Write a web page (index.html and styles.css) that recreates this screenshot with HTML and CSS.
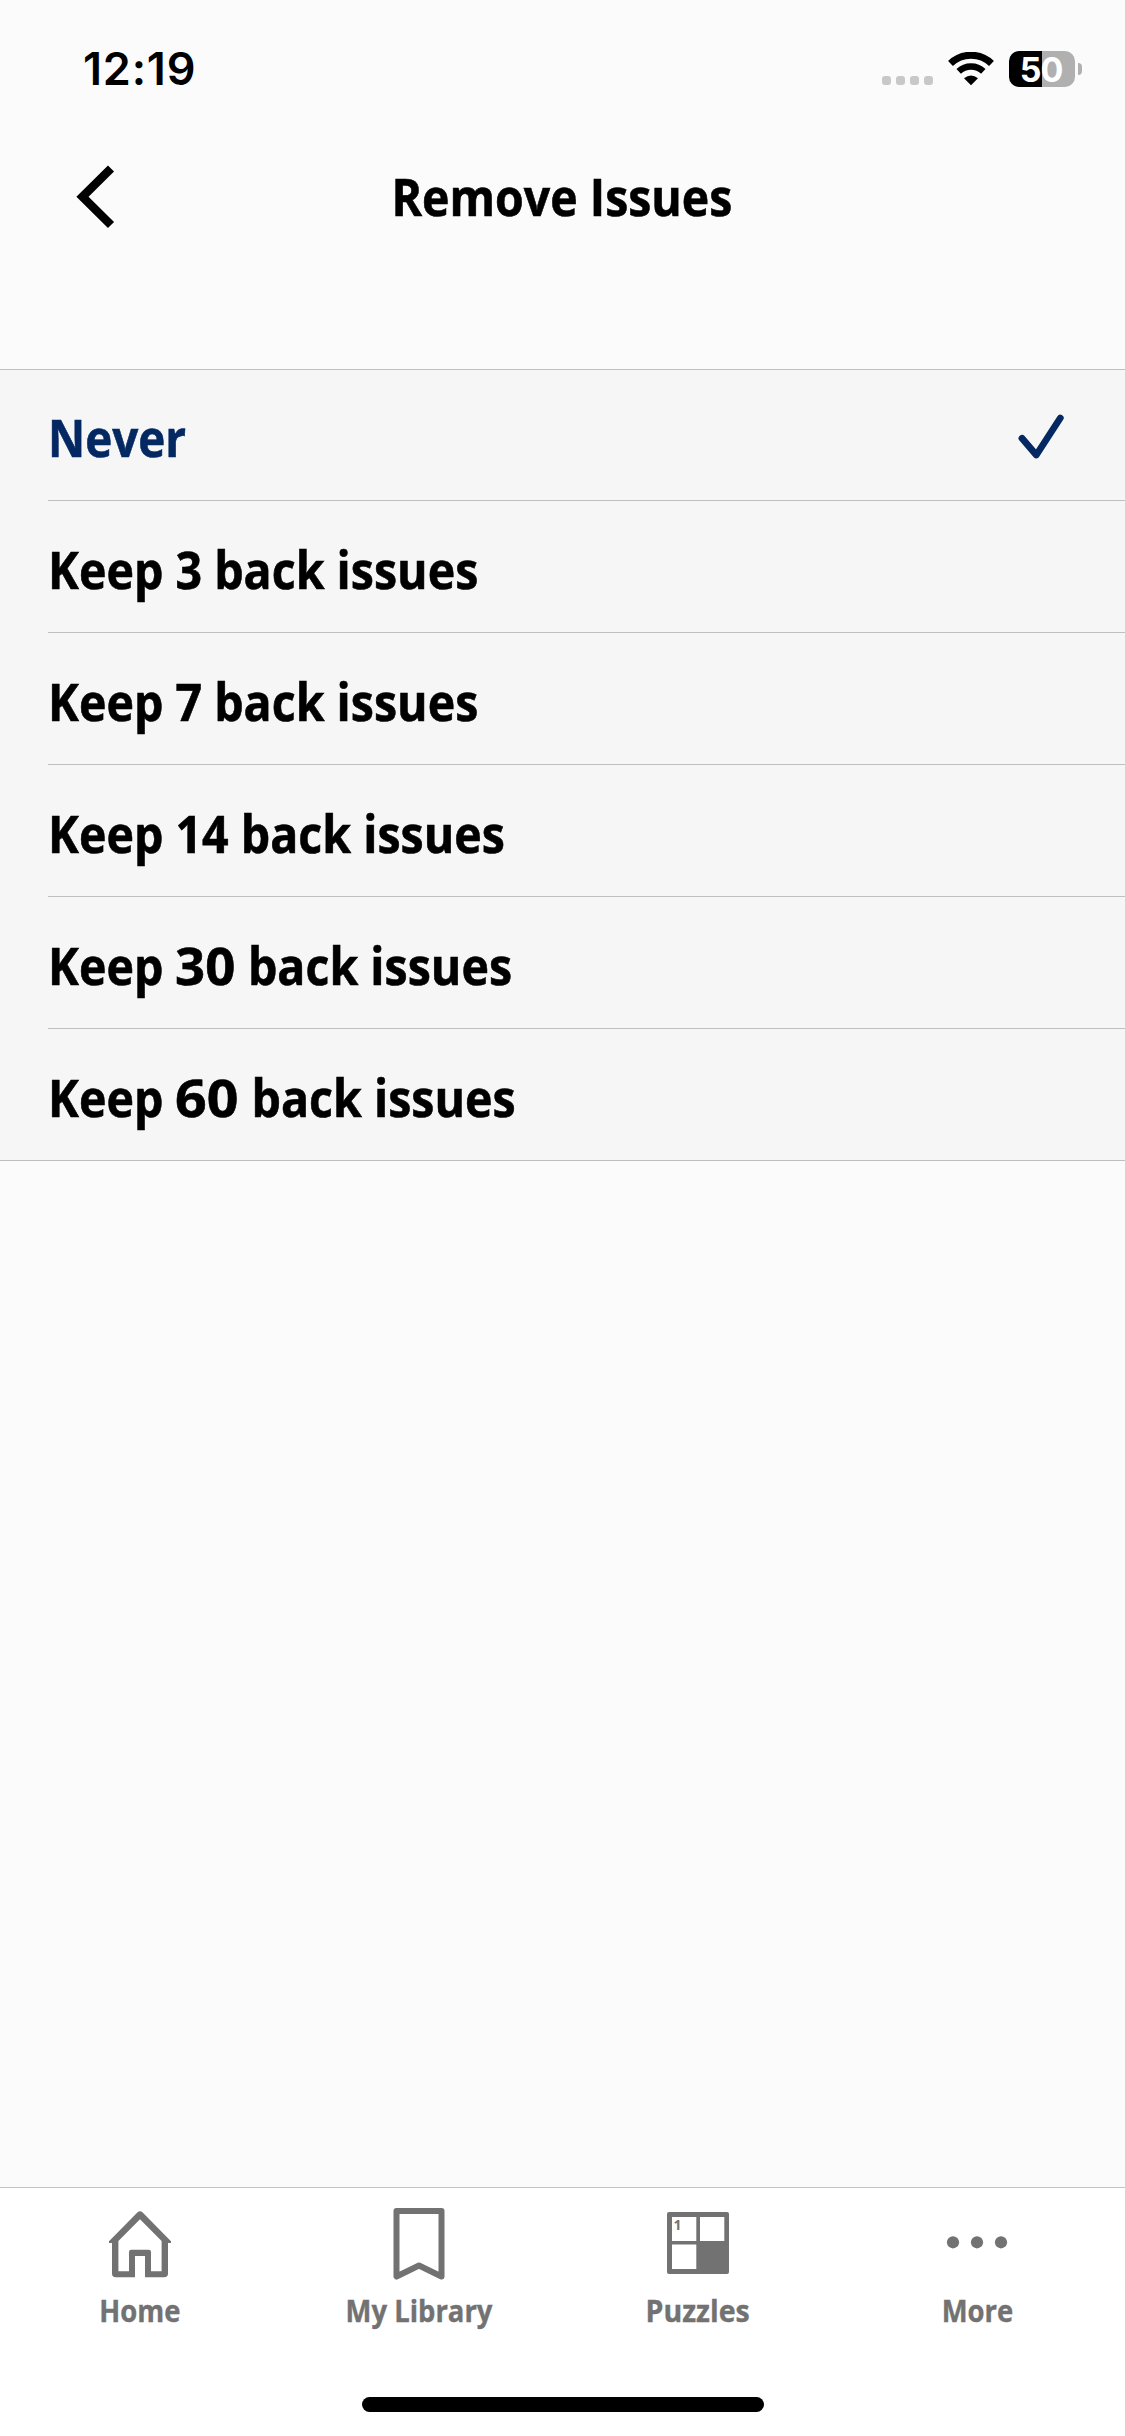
FILE: index.html
```html
<!DOCTYPE html>
<html lang="en">
<head>
<meta charset="utf-8">
<title>Remove Issues</title>
<link rel="stylesheet" href="styles.css">
</head>
<body>
<div class="screen">
  <div class="status">
    <span class="time">12:19</span>
    <div class="indicators">
      <div class="signal"><i></i><i></i><i></i><i></i></div>
      <svg class="wifi" width="46" height="34" viewBox="0 0 46 34">
        <path d="M2.5 11.5A29.5 29.5 0 0 1 43.5 11.5" fill="none" stroke="#000" stroke-width="7"/>
        <path d="M10.7 19.3A18 18 0 0 1 35.3 19.3" fill="none" stroke="#000" stroke-width="6.5"/>
        <path d="M16 26.3Q23 20.5 30 26.3L23 33.3Z"/>
      </svg>
      <div class="battery"><span>50</span></div>
      <div class="nub"></div>
    </div>
  </div>
  <header class="nav">
    <svg class="back" width="40" height="66" viewBox="0 0 40 66"><path d="M36 4.500L7.500 32.700L36 61" fill="none" stroke="#000" stroke-width="8.6"/></svg>
    <h1><span>Remove Issues</span></h1>
  </header>
  <ul class="options">
    <li class="selected"><span class="label">Never</span>
      <svg class="check" width="46" height="48" viewBox="0 0 46 48"><path d="M4 25.300L18.300 42L42.300 5" fill="none" stroke="#042962" stroke-width="6.8" stroke-linecap="round" stroke-linejoin="round"/></svg></li>
    <li><span class="label">Keep 3 back issues</span></li>
    <li><span class="label">Keep 7 back issues</span></li>
    <li><span class="label">Keep 14 back issues</span></li>
    <li><span class="label">Keep <b class="n30">30</b> back issues</span></li>
    <li><span class="label">Keep <b class="n60">60</b> back issues</span></li>
  </ul>
  <nav class="tabbar">
    <div class="tabs">
      <div class="tab">
        <svg width="80" height="80" viewBox="0 0 80 80"><path class="solid" fill-rule="evenodd" d="M37.600 10.300Q40 8.200 42.400 10.300L71 39.200V41H68V71.500Q68 75.300 64.200 75.300H45V54H35V75.300H15.800Q12 75.300 12 71.500V41H9V39.200ZM40 17.300L18.400 39V69.300H29V50Q29 47.800 31.200 47.800H48.800Q51 47.800 51 50V69.300H61.600V39Z"/></svg>
        <span>Home</span>
      </div>
      <div class="tab">
        <svg width="80" height="80" viewBox="0 0 80 80"><path d="M17.500 9H62.500V74.500L40 63.500L17.500 74.500Z" fill="none"/></svg>
        <span>My Library</span>
      </div>
      <div class="tab">
        <svg width="80" height="80" viewBox="0 0 80 80"><rect class="solid" x="9" y="10" width="62" height="62" rx="2"/><path class="cell" d="M14 15H38.300V39H14ZM42 15H66.300V39H42ZM14 42.500H38.300V67H14Z"/><text x="15.500" y="27.500">1</text></svg>
        <span class="puzzles">Puzzles</span>
      </div>
      <div class="tab">
        <svg width="80" height="80" viewBox="0 0 80 80"><g class="solid"><circle cx="16" cy="40.300" r="6.100"/><circle cx="40" cy="40.300" r="6.100"/><circle cx="64" cy="40.300" r="6.100"/></g></svg>
        <span>More</span>
      </div>
    </div>
    <div class="home-indicator"></div>
  </nav>
</div>
</body>
</html>
```
FILE: styles.css
```css
* { box-sizing: border-box; }
body { margin: 0; background: #fbfbfb; color: #000; font-family: "Open Sans", "Noto Sans", sans-serif; }
.screen { width: 1125px; height: 2436px; display: flex; flex-direction: column; overflow: hidden; }
.status { height: 138px; flex: none; display: flex; justify-content: space-between; align-items: flex-start; padding: 0 43px 0 83px; }
.time { font: 600 45px/60px Inter, sans-serif; letter-spacing: .8px; margin-top: 39px; }
.indicators { display: flex; align-items: center; height: 36px; margin-top: 51px; }
.signal { display: flex; gap: 5px; margin: 23px 15px 0 0; }
.signal i { width: 9px; height: 9px; border-radius: 3px; background: #c8c8c8; }
.wifi { margin-right: 15px; display: block; }
.battery { width: 66px; height: 36px; border-radius: 10px; background: linear-gradient(90deg, #000 50%, #b0b0b0 50%); color: #fff; font: 650 34px/37px Inter, sans-serif; text-align: center; letter-spacing: -1px; }
.battery span { position: relative; left: -1px; }
.nub { width: 4px; height: 12px; margin-left: 3px; border-radius: 0 4px 4px 0; background: #b0b0b0; }
.nav { height: 231px; flex: none; display: grid; grid-template-columns: 150px 1fr 150px; align-items: start; }
.back { margin: 26px 0 0 75px; }
h1 { margin: 22px 0 0; font-size: 52px; line-height: 72px; text-align: center; font-weight: 700; white-space: nowrap; -webkit-text-stroke: .6px; }
h1 span { display: inline-block; transform: translateX(-1px) scaleX(.893); }
.options { list-style: none; margin: 0; padding: 0 0 0 48px; height: 792px; flex: none; background: #f6f6f6; border: solid #bfbfbf; border-width: 1px 0; }
.options li { height: 132px; display: flex; align-items: center; justify-content: space-between; border-bottom: 1px solid #bfbfbf; padding: 5px 61px 0 0; }
.options li:first-child { height: 131px; padding-top: 4px; }
.options li:last-child { border: 0; height: 131px; }
.label { font-size: 52px; line-height: 72px; font-weight: 700; white-space: nowrap; transform: scaleX(.895); transform-origin: left; -webkit-text-stroke: .6px; }
.label b { display: inline-block; font-weight: 700; transform-origin: left; }
.label .n30 { transform: scaleX(1.13); margin-right: 8px; }
.label .n60 { transform: scaleX(1.19); margin-right: 12px; }
.selected { color: #042962; }
.selected .label { transform: scaleX(.88); }
.tabbar { margin-top: auto; height: 249px; background: #fff; border-top: 1px solid #c3c3c3; display: flex; flex-direction: column; }
.tabs { width: 1117px; display: grid; grid-template-columns: repeat(4, 1fr); height: 209px; }
.tab { display: flex; flex-direction: column; align-items: center; padding-top: 14px; color: #727272; }
.tab svg { display: block; stroke: #727272; stroke-width: 6; stroke-linejoin: round; }
.tab svg .solid { fill: #727272; stroke: none; }
.tab svg .cell { fill: #fff; stroke: none; }
.tab text { font: 700 14px "Noto Sans", sans-serif; fill: #727272; stroke: none; }
.tab span { margin-top: 8px; font-size: 31px; line-height: 40px; font-weight: 700; white-space: nowrap; transform: scaleX(.885); -webkit-text-stroke: .4px; }
.tab .puzzles { transform: scaleX(.92); }
.home-indicator { width: 402px; height: 15px; border-radius: 8px; background: #000; margin: 0 auto; }
```
